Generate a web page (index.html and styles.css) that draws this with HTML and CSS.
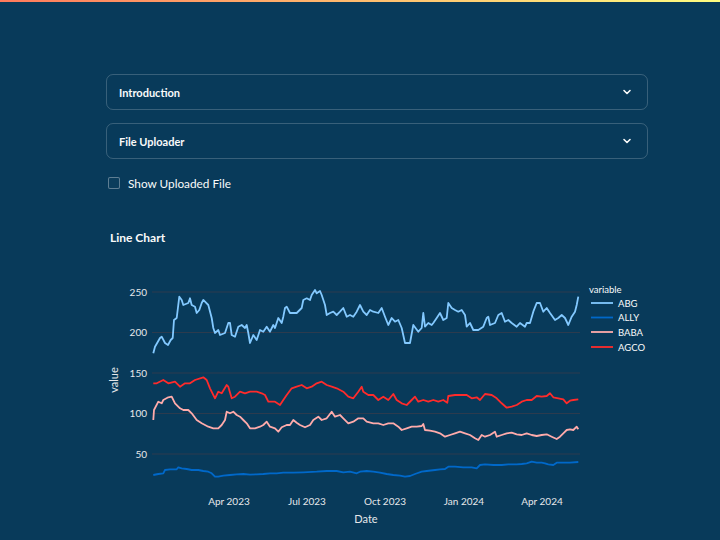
FILE: index.html
```html
<!DOCTYPE html>
<html>
<head>
<meta charset="utf-8">
<link rel="stylesheet" href="styles.css">
</head>
<body>
<div class="decoration"></div>
<main class="main">
  <div class="expander">
    <span>Introduction</span>
    <svg class="chev" viewBox="0 0 10 10"><path d="M2 3.5 L5 6.5 L8 3.5" /></svg>
  </div>
  <div class="expander">
    <span>File Uploader</span>
    <svg class="chev" viewBox="0 0 10 10"><path d="M2 3.5 L5 6.5 L8 3.5" /></svg>
  </div>
  <label class="check-row">
    <span class="box"></span>
    <span class="check-label">Show Uploaded File</span>
  </label>
  <h3 class="chart-title">Line Chart</h3>
  <svg class="chart" viewBox="106 246 542 294" width="542" height="294">
    <g class="grid">
      <line x1="152" x2="580" y1="292" y2="292"/>
      <line x1="152" x2="580" y1="332.5" y2="332.5"/>
      <line x1="152" x2="580" y1="373" y2="373"/>
      <line x1="152" x2="580" y1="413.5" y2="413.5"/>
      <line x1="152" x2="580" y1="454" y2="454"/>
    </g>
    <g class="ytick">
      <text x="147" y="295.5">250</text>
      <text x="147" y="336">200</text>
      <text x="147" y="376.5">150</text>
      <text x="147" y="417">100</text>
      <text x="147" y="457.5">50</text>
    </g>
    <text class="axis-title" transform="translate(118 380) rotate(-90)">value</text>
    <g class="xtick">
      <text x="229" y="504.5">Apr 2023</text>
      <text x="307" y="504.5">Jul 2023</text>
      <text x="385" y="504.5">Oct 2023</text>
      <text x="464" y="504.5">Jan 2024</text>
      <text x="542" y="504.5">Apr 2024</text>
    </g>
    <text class="axis-title" x="366" y="523">Date</text>

    <polyline class="s-abg" points="153.3,353.3 155,346.7 160,338 161.7,336.7 165,343 168,345 170.7,340 172.7,338 174,320 176.7,318 179.3,296.7 181.7,300 183.3,305 188.3,303 190,298.3 191.7,305 195,306.7 196.7,313 199.3,310 201.7,303 203.3,300 205,301.7 208.3,305 211.7,318 213.3,328 215,333 218.3,330 220,335 225,333 228.3,323 230,323 231.7,335 235,336.7 238.3,326.7 241.7,325 245,328 246.7,325 248.3,333 250,343 253.3,335 256.7,340 260,330 263.3,331.7 266.7,326.7 270,331.7 273.3,325 275,328 278.3,318 281.7,323 283.3,316.7 285,308 286.7,306.7 290,313 293.3,313 296.7,313 301.7,308 303.3,300 306.7,298.3 310,300 311.7,295 315,290 316.7,293.3 320,291 321.7,295 325,305 326.7,315 330,313 333.3,311.7 336.7,315 340,311.7 343.3,308 346.7,316.7 350,315 353.3,316.7 356.7,311.7 360,305 363.3,311.7 366.7,315 370,310 373.3,311.7 378.3,313 381.7,308 385,316.7 388.3,325 391.7,318 395,321.7 398.3,320 401.7,328 405,343 410,343 413.3,325 418.3,331.7 421.7,328 423.3,313 425,326.7 428.3,323 431.7,325 433.3,323 436.7,318 440,313 443.3,320 446.7,318 448.3,303 451.7,308 455,310 458.3,311.7 461.7,310 465,315 466.7,326.7 470,323 473.3,330 478.3,330 483.3,326.7 486.7,318 488.3,316.7 490,325 495,323 498.3,315 501.7,313 505,321.7 508.3,320 511.7,323 516.7,326.7 520,323 525,326.7 526.7,323 530,323 533.3,311.7 536.7,303 540,303 543.3,311.7 546.7,308 550,313 555,320 558.3,318 561.7,315 565,318 568.3,325 571.7,316.7 575,311.7 576.7,305 578.3,296.7"/>

    <polyline class="s-agco" points="153.3,383.3 156.7,383.3 163.3,380 168.3,383.3 175,381.7 180,386.7 185,383.3 190,383.3 195,380 203.3,377.3 206.7,380 210,388.3 215,398.3 218.3,391.7 221.7,393.3 226.7,385 228.3,386.7 231.7,398.3 235,396.7 240,391.7 245,393.3 250,391.7 256.7,391.7 261.7,393.3 265,395 268.3,401.7 275,401.7 280,405 283.3,400 286.7,395 291.7,388.3 296.7,386.7 301.7,385 306.7,388.3 311.7,386.7 316.7,383.3 321.7,381.7 326.7,385 331.7,386.7 336.7,388.3 343.3,391.7 348.3,396.7 353.3,398.3 358.3,391.7 361.7,386.7 363.3,391.7 368.3,395 373.3,395 378.3,400 383.3,396.7 388.3,400 393.3,394 396.7,400 401.7,403.3 406.7,405 411.7,400 415,396.7 418.3,401.7 423.3,400 428.3,401.7 433.3,400 438.3,401.7 443.3,400 447.3,402.7 448.3,396 455,395 460,395 466.7,395 471.7,398.3 476.7,397.3 480,400 485,394 491.7,395 496.7,398.3 501.7,403.3 506.7,407.7 511.7,406.7 516.7,405 521.7,401.7 526.7,400 531.7,400 536.7,396 541.7,396.7 546.7,396 550,393.3 553.3,397.3 558.3,398.3 563.3,399.3 566.7,403.3 570,400.7 573.3,400 578.3,399.3"/>

    <polyline class="s-baba" points="153.3,420 154,410 158.3,401.7 161.7,403.3 163.3,400 168.3,397.3 171.7,396.7 175,403.3 180,408.3 183.3,410 188.3,410 191.7,413.3 196.7,420 201.7,423.3 208.3,426.7 213.3,428.3 218.3,428.3 221.7,425 225,420 226.7,411.7 230,413.3 233.3,411.7 236.7,415 240,416.7 243.3,420 246.7,423.3 250,428.3 255,428.3 260,426.7 263.3,425 266.7,421.7 270,426.7 275,428.3 278.3,431.7 281.7,427.3 286.7,425 290,425 293.3,420 296.7,422.7 300,425 305,427.3 310,425 313.3,420 318.3,416.7 321.7,420 326.7,418.3 331.7,411.7 335,416.7 340,415 343.3,418.3 348.3,423.3 353.3,421.7 358.3,418.3 363.3,418.3 366.7,421.7 373.3,423.3 378.3,423.3 383.3,425 388.3,423.3 393.3,423.3 398.3,426.7 401.7,430 406.7,428.3 411.7,426.7 416.7,426.7 421.7,426 423.3,424 425,430 430,430.7 435,431.7 440,433.3 445,436.7 450,435 455,433.3 460,431.7 465,433.3 470,435 475,438.3 478.3,440 481.7,435 485,436.7 490,435 495,431.7 496.7,436.7 501.7,435 506.7,433.3 511.7,432.7 516.7,434.3 521.7,435 526.7,433.3 531.7,435 536.7,436 541.7,435 546.7,434.3 551.7,436.7 556.7,439 560,436.7 563.3,433.3 566.7,430 570,429.3 573.3,430 576.7,426.7 578.3,429.3"/>

    <polyline class="s-ally" points="153.3,475 158.3,474 163.3,473.3 165,470 170,469.3 176.7,469.3 178.3,467.3 181.7,468.3 186.7,469 191.7,470 198.3,470 203.3,471 208.3,471.7 211.7,473.3 215,476.7 218.3,476.7 223.3,475.7 230,475 236.7,474.3 243.3,474 250,474.7 256.7,474.3 263.3,474 270,473.3 276.7,473.3 283.3,472.7 293.3,472.7 303.3,472.3 316.7,471.7 326.7,471 336.7,471 343.3,472.3 350,471.7 356.7,473.3 360,471.7 366.7,471 373.3,471.7 380,472.7 386.7,474 393.3,475 400,475.7 405,476.7 410,476 415,474 421.7,471.7 426.7,471 435,470 440,469.3 445,469 448.3,466.7 455,466.7 463.3,467.3 471.7,467.3 476.7,468.3 480,465 485,464.3 493.3,465 501.7,465 508.3,464.3 516.7,464.3 521.7,464 526.7,463.3 531.7,461.7 536.7,462.7 541.7,462.7 545,463.3 548.3,464.3 553.3,465 556.7,462.7 563.3,462.7 570,462.7 578.3,462"/>

    <g class="legend">
      <text class="legend-title" x="589" y="292.5">variable</text>
      <line class="s-abg" x1="591" x2="613" y1="303" y2="303"/>
      <text x="618" y="306.5">ABG</text>
      <line class="s-ally" x1="591" x2="613" y1="317.5" y2="317.5"/>
      <text x="618" y="321">ALLY</text>
      <line class="s-baba" x1="591" x2="613" y1="332" y2="332"/>
      <text x="618" y="335.5">BABA</text>
      <line class="s-agco" x1="591" x2="613" y1="347" y2="347"/>
      <text x="618" y="350.5">AGCO</text>
    </g>
  </svg>
</main>
</body>
</html>
```
FILE: styles.css
```css
html, body {
  margin: 0;
  padding: 0;
  background: #083a5a;
  font-family: Lato, "Liberation Sans", sans-serif;
  color: #fafafa;
  overflow: hidden;
}

.decoration {
  height: 2px;
  background: linear-gradient(90deg, #ff7a5c, #fffd80);
}

.main {
  width: 542px;
  margin-left: 106px;
  padding-top: 72px;
}

.expander {
  box-sizing: border-box;
  height: 36px;
  border: 1px solid rgba(250, 250, 250, 0.2);
  border-radius: 7px;
  display: flex;
  align-items: center;
  justify-content: space-between;
  padding: 0 15px 0 12px;
  font-size: 11px;
  font-weight: 700;
}

.expander + .expander {
  margin-top: 13px;
}

.chev {
  width: 10px;
  height: 10px;
}

.chev path {
  fill: none;
  stroke: #fafafa;
  stroke-width: 1.6;
  stroke-linecap: round;
  stroke-linejoin: round;
}

.check-row {
  display: flex;
  align-items: center;
  height: 20px;
  margin-top: 14px;
  padding-left: 2px;
  gap: 8px;
}

.box {
  box-sizing: border-box;
  width: 12px;
  height: 12px;
  border: 1px solid rgba(250, 250, 250, 0.35);
  border-radius: 2px;
  background: #0b3d5c;
}

.check-label {
  font-size: 11.8px;
}

.chart-title {
  margin: 37px 0 0 4px;
  font-size: 12px;
  line-height: 16px;
  font-weight: 700;
}

.chart {
  display: block;
}

.grid line {
  stroke: #2c3b4e;
  stroke-width: 1;
}

.ytick text {
  font-size: 10px;
  fill: #e6e8ea;
  text-anchor: end;
}

.xtick text {
  font-size: 10px;
  fill: #e6e8ea;
  text-anchor: middle;
}

.axis-title {
  font-size: 11px;
  fill: #e6e8ea;
  text-anchor: middle;
}

polyline, .legend line {
  fill: none;
  stroke-width: 1.8;
  stroke-linejoin: round;
}

.s-abg { stroke: #83c9ff; }
.s-ally { stroke: #0068c9; }
.s-baba { stroke: #ffabab; }
.s-agco { stroke: #ff2b2b; }

.legend text {
  font-size: 9.5px;
  fill: #fafafa;
}
```
